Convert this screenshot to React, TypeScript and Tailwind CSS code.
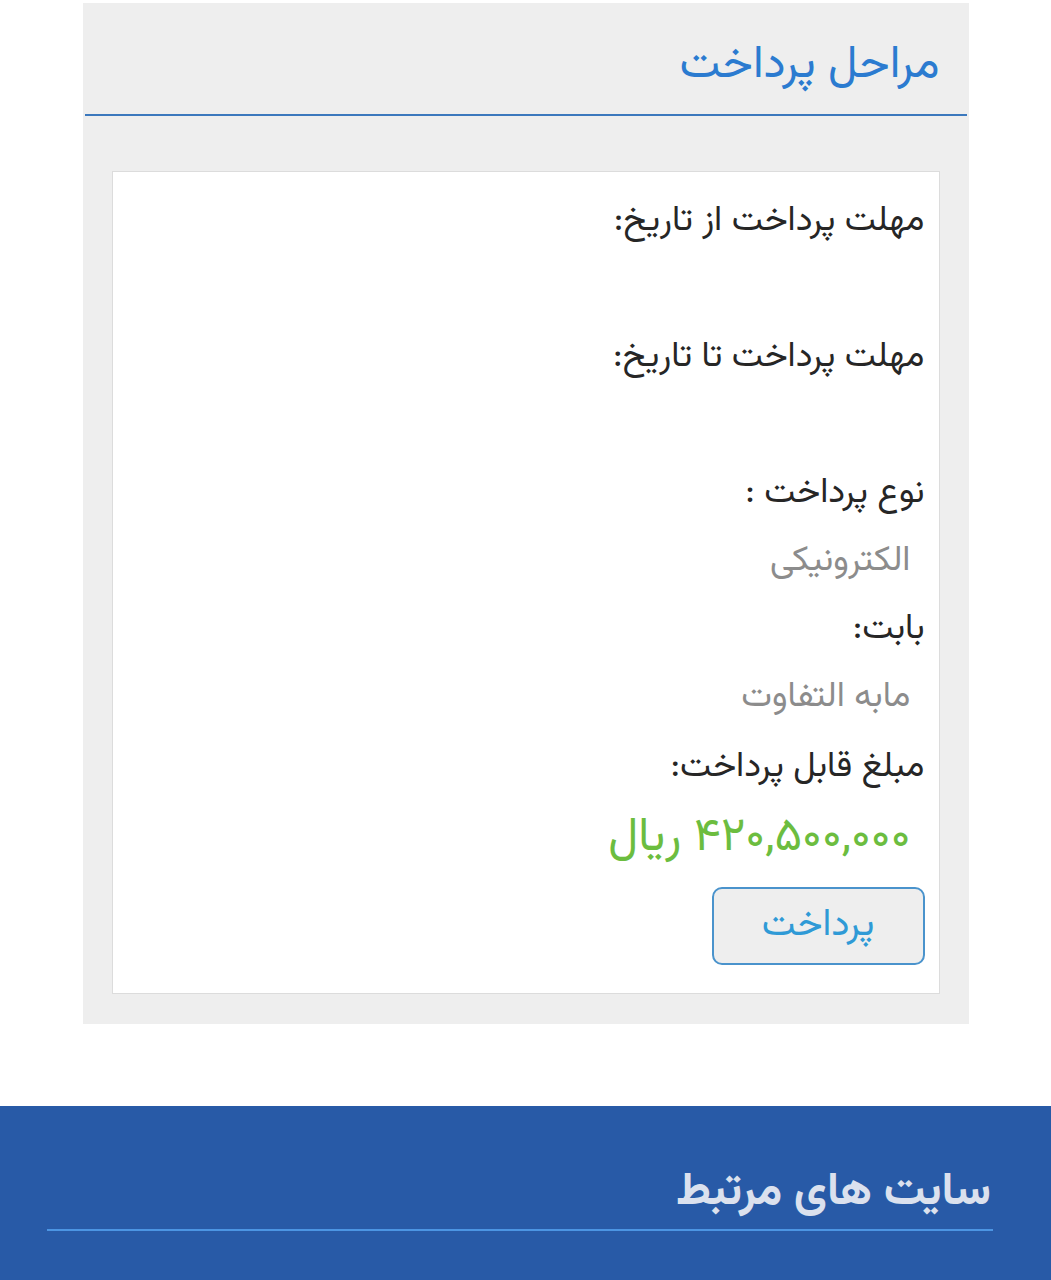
import React from "react";

const FONT = "font-['Vazirmatn','DejaVu_Sans','Noto_Sans',sans-serif]";

function Row({ children, tone = "label", h = "h-[68px]" }: { children?: React.ReactNode; tone?: "label" | "value"; h?: string }) {
  return (
    <div
      className={`${h} flex items-center leading-none ${
        tone === "value" ? "pr-[14px] text-[#8c8c8c]" : "text-[#262626]"
      } text-[35px]`}
    >
      {children}
    </div>
  );
}

export default function App() {
  return (
    <div dir="rtl" className={`${FONT} bg-white min-h-[1280px] pt-[3px]`}>
      <section className="mx-auto w-[886px] bg-[#eeeeee]">
        <div className="mx-[2px] h-[113px] border-b-2 border-[#3b78bd] flex items-center pr-[27px] pt-[14px]">
          <h2 className="text-[46px] leading-none text-[#2b7bd0]">مراحل پرداخت</h2>
        </div>

        <div className="px-[29px] pt-[55px] pb-[30px]">
          <div className="bg-white border border-[#dcdcdc] pr-[14px] pt-[15px] pb-[28px]">
            <Row>مهلت پرداخت از تاریخ:</Row>
            <Row />
            <Row>مهلت پرداخت تا تاریخ:</Row>
            <Row />
            <Row>نوع پرداخت :</Row>
            <Row tone="value">الکترونیکی</Row>
            <Row>بابت:</Row>
            <Row tone="value">مابه التفاوت</Row>
            <Row h="h-[72px]">مبلغ قابل پرداخت:</Row>
            <div className="h-[70px] flex items-center leading-none pr-[14px] text-[47px] text-[#6cbd3f]">
              ۴۲۰,۵۰۰,۰۰۰ ریال
            </div>
            <div className="pt-[14px]">
              <button className="w-[213px] h-[78px] rounded-[10px] border-2 border-[#4a93cc] bg-[#eeeeee] text-[38px] leading-none text-[#2f9ad6]">
                پرداخت
              </button>
            </div>
          </div>
        </div>
      </section>

      <footer className="mt-[82px] bg-[#285aa7] h-[174px] pt-[57px]">
        <div className="ml-[47px] mr-[58px] border-b-2 border-[#4c95e3] pb-[6px] pr-[2px]">
          <h3 className="text-[46px] leading-[60px] font-bold text-[#dbe1ee]">سایت های مرتبط</h3>
        </div>
      </footer>
    </div>
  );
}
